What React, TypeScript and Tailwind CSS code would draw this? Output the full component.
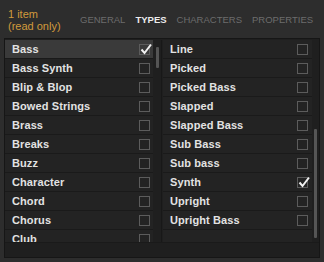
const left = ["Bass", "Bass Synth", "Blip & Blop", "Bowed Strings", "Brass", "Breaks", "Buzz", "Character", "Chord", "Chorus", "Club"];
const right = ["Line", "Picked", "Picked Bass", "Slapped", "Slapped Bass", "Sub Bass", "Sub bass", "Synth", "Upright", "Upright Bass"];

function Box({ checked }: { checked: boolean }) {
    return (
        <div className="relative w-[11px] h-[11px] border border-[#5c5c5c] shrink-0">
            {checked && (
                <svg className="absolute -top-[3px] -left-[1px]" width="14" height="14" viewBox="0 0 14 14">
                    <path d="M2.5 7.5 L5.5 11 L12 2.5" fill="none" stroke="#f0f0f0" strokeWidth="2" />
                </svg>
            )}
        </div>
    );
}

function Row({ label, checked, selected, boxX }: { label: string; checked: boolean; selected?: boolean; boxX: string }) {
    return (
        <div className={`h-[19px] shrink-0 flex items-center border-b border-[#1a1a1a] ${selected ? "bg-[#3a3a3a]" : "bg-[#232323]"}`}>
            <span className="pl-[7px] text-[11px] font-bold text-[#e2e2e2] tracking-[0.1px] leading-none">{label}</span>
            <div className={`ml-auto ${boxX}`}>
                <Box checked={checked} />
            </div>
        </div>
    );
}

export default function App() {
    return (
        <div className="w-[324px] h-[262px] bg-[#2d2d2d] overflow-hidden" style={{ fontFamily: "'Liberation Sans', Arial, sans-serif" }}>
            {/* header */}
            <div className="h-[38px] flex items-end pb-[6px] pl-[8px]">
                <div className="text-[11px] leading-[12px] text-[#d19a3c] w-[72px] shrink-0">
                    1 item<br />(read only)
                </div>
                <div className="flex gap-[10px] text-[9.5px] pb-[8px] leading-none whitespace-nowrap">
                    <span className="text-[#6c6c6c]">GENERAL</span>
                    <span className="text-[#ececec] font-bold">TYPES</span>
                    <span className="text-[#6c6c6c]">CHARACTERS</span>
                    <span className="text-[#6c6c6c]">PROPERTIES</span>
                </div>
            </div>

            {/* panel */}
            <div className="ml-[4px] w-[316px] h-[220px] border border-[#161616] bg-[#1f1f1f] flex flex-col">
                <div className="h-[203px] pt-[1px] flex overflow-hidden">
                    {/* left list */}
                    <div className="w-[148px] flex flex-col overflow-hidden">
                        {left.map((t, i) => (
                            <Row key={t} label={t} checked={i === 0} selected={i === 0} boxX="mr-[3px]" />
                        ))}
                    </div>
                    <div className="w-[8px] relative">
                        <div className="absolute left-[3px] top-[7px] w-[3px] h-[21px] bg-[#555555] rounded-[1px]" />
                    </div>
                    <div className="w-[1px] bg-[#181818]" />
                    <div className="w-[1px]" />
                    {/* right list */}
                    <div className="w-[149px] flex flex-col overflow-hidden">
                        {right.map((t) => (
                            <Row key={t} label={t} checked={t === "Synth"} boxX="mr-[4px]" />
                        ))}
                        <div className="flex-1 bg-[#232323]" />
                    </div>
                    <div className="flex-1 relative">
                        <div className="absolute left-[2px] top-[89px] w-[3px] h-[109px] bg-[#555555] rounded-[1px]" />
                    </div>
                </div>
                <div className="border-t border-[#1a1a1a] flex-1" />
            </div>
        </div>
    );
}
